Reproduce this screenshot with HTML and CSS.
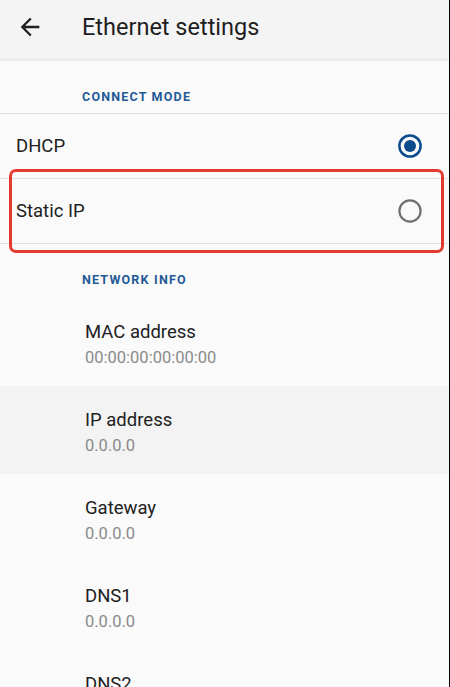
FILE: index.html
```html
<!DOCTYPE html>
<html>
<head>
<meta charset="utf-8">
<link rel="stylesheet" href="styles.css">
</head>
<body>
<div class="screen">
  <header class="toolbar">
    <svg class="back" viewBox="0 0 24 24" width="28" height="28"><path d="M20 11H7.83l5.59-5.59L12 4l-8 8 8 8 1.41-1.41L7.83 13H20v-2z" fill="#212121"/></svg>
    <h1 class="title">Ethernet settings</h1>
  </header>
  <main class="content">
    <div class="category first">CONNECT MODE</div>
    <div class="options">
      <div class="option">
        <span class="option-label">DHCP</span>
        <svg class="radio" viewBox="0 0 24 24" width="24" height="24"><circle cx="12" cy="12" r="10.6" fill="none" stroke="#0b4a8c" stroke-width="2.5"/><circle cx="12" cy="12" r="6" fill="#0b4a8c"/></svg>
      </div>
      <div class="option">
        <span class="option-label">Static IP</span>
        <svg class="radio" viewBox="0 0 24 24" width="24" height="24"><circle cx="12" cy="12" r="10.6" fill="none" stroke="#6f6f6f" stroke-width="2.2"/></svg>
      </div>
      <div class="highlight"></div>
    </div>
    <div class="category second">NETWORK INFO</div>
    <div class="pref"><div class="pref-title">MAC address</div><div class="pref-summary">00:00:00:00:00:00</div></div>
    <div class="pref pressed"><div class="pref-title">IP address</div><div class="pref-summary">0.0.0.0</div></div>
    <div class="pref"><div class="pref-title">Gateway</div><div class="pref-summary">0.0.0.0</div></div>
    <div class="pref"><div class="pref-title">DNS1</div><div class="pref-summary">0.0.0.0</div></div>
    <div class="pref"><div class="pref-title">DNS2</div><div class="pref-summary">0.0.0.0</div></div>
  </main>
</div>
</body>
</html>
```
FILE: styles.css
```css
html, body {
  margin: 0;
  padding: 0;
  height: 100%;
  overflow: hidden;
}
body {
  font-family: Roboto, "Noto Sans", sans-serif;
  background: #fafafa;
}
.screen {
  width: 449px;
  height: 687px;
  border-right: 1px solid #000;
  background: #fafafa;
  display: flex;
  flex-direction: column;
  overflow: hidden;
}
.toolbar {
  height: 59px;
  flex: none;
  display: flex;
  align-items: center;
  background: #f4f4f4;
  box-shadow: 0 1px 2px rgba(0,0,0,0.12);
  position: relative;
  z-index: 1;
}
.back {
  margin-left: 16px;
  margin-top: -6px;
}
.title {
  margin: -5px 0 0 38px;
  font-size: 23.5px;
  font-weight: 400;
  color: #1e1e1e;
}
.content {
  display: flex;
  flex-direction: column;
}
.category {
  padding-left: 82px;
  font-size: 12.5px;
  font-weight: 700;
  letter-spacing: 1.2px;
  color: #1f5a96;
  display: flex;
  align-items: center;
}
.category.first {
  height: 55px;
  padding-top: 21px;
  box-sizing: border-box;
  border-bottom: 1px solid #e2e2e2;
}
.category.second {
  height: 54px;
  padding-top: 17px;
  box-sizing: border-box;
}
.options {
  position: relative;
}
.option {
  height: 64px;
  display: flex;
  align-items: center;
  justify-content: space-between;
  padding: 0 27px 0 16px;
  border-bottom: 1px solid #e2e2e2;
}
.option-label {
  font-size: 18.5px;
  color: #212121;
}
.highlight {
  position: absolute;
  left: 9px;
  top: 55px;
  width: 429px;
  height: 78px;
  border: 3px solid #e53a2f;
  border-radius: 7px;
}
.pref {
  height: 88px;
  flex: none;
  box-sizing: border-box;
  padding-left: 85px;
  padding-top: 21px;
}
.pref.pressed {
  background: #f3f3f3;
}
.pref-title {
  font-size: 18.5px;
  color: #212121;
  line-height: 26px;
}
.pref-summary {
  font-size: 16.5px;
  color: #8a8a8a;
  line-height: 26px;
}
```
